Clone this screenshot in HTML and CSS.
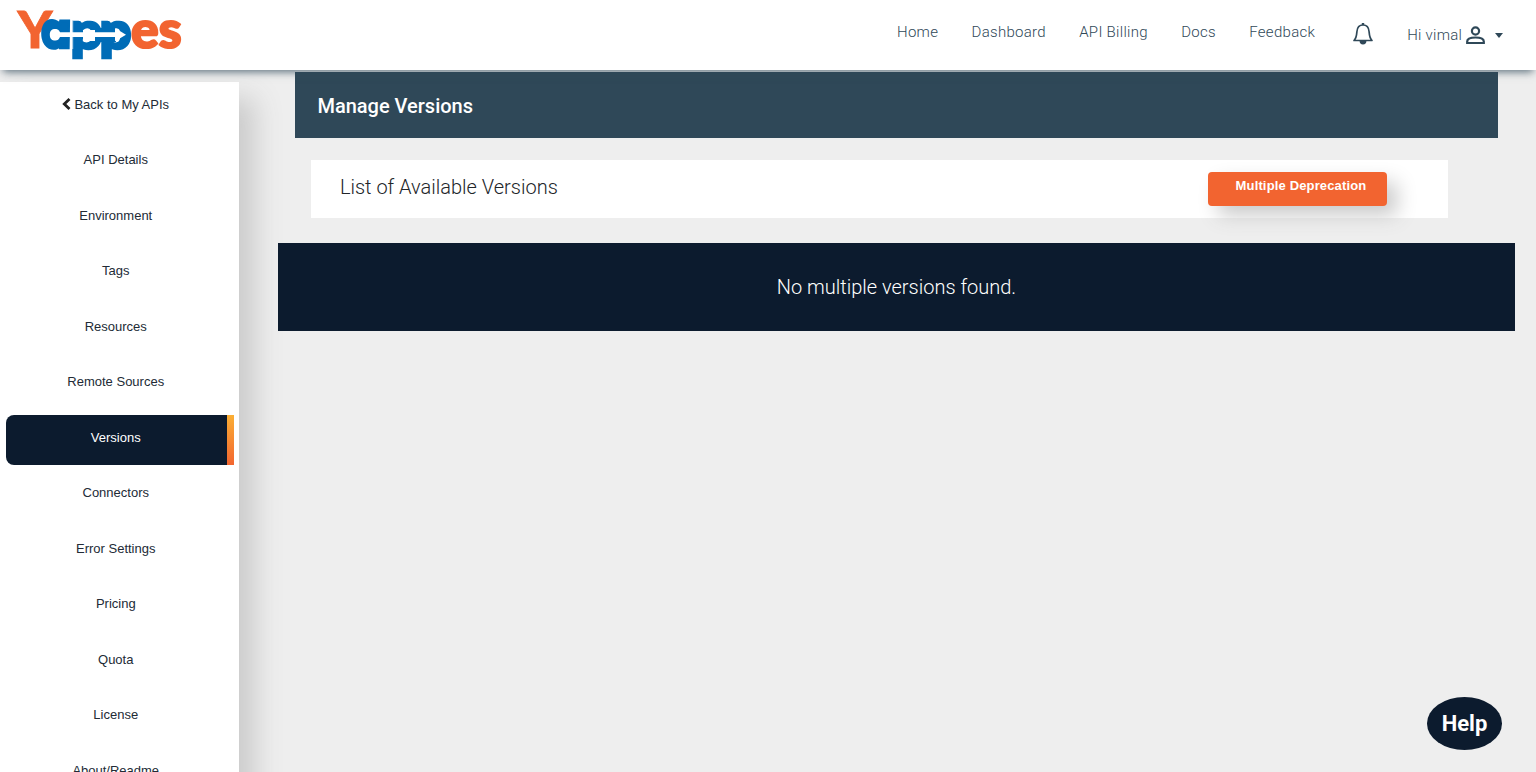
FILE: index.html
```html
<!DOCTYPE html>
<html lang="en">
<head>
<meta charset="utf-8">
<title>Yappes - Manage Versions</title>
<link rel="stylesheet" href="styles.css">
</head>
<body>
<header class="topbar">
  <svg class="logo" width="200" height="70" viewBox="0 0 200 70" role="img" aria-label="Yappes">
    <g class="logo-orange">
      <text x="17.500" y="48" textLength="35" lengthAdjust="spacingAndGlyphs">Y</text>
      <text class="logo-es" x="131" y="48" textLength="50.500" lengthAdjust="spacingAndGlyphs">es</text>
    </g>
    <g class="logo-blue">
      <text class="logo-a" transform="translate(43 48) skewX(12)" textLength="32" lengthAdjust="spacingAndGlyphs">a</text>
      <text x="70.500" y="48.500" textLength="32" lengthAdjust="spacingAndGlyphs">p</text>
      <text x="99.500" y="48.500" textLength="32" lengthAdjust="spacingAndGlyphs">p</text>
    </g>
    <path class="logo-fill" d="M76 30.500H84V39H76ZM94 28H116V42H94Z"/>
    <path class="logo-arrow" d="M60 32.300H83V30H95V32.300H115V28L126 34.700L115 41.300V37H95V41H83V37H60C59 39.500 57.500 40.500 55.500 40.500C51.500 40.500 49.800 38.500 49.800 34.700S51.500 29 55.500 29C57.500 29 59 29.800 60 32.300Z"/>
    <path class="logo-gap" d="M72.700 21V49"/>
  </svg>
  <nav class="nav">
    <a>Home</a><a>Dashboard</a><a>API Billing</a><a>Docs</a><a>Feedback</a>
  </nav>
  <svg class="bell" width="22" height="24" viewBox="0 0 22 24">
    <path class="line" d="M2 18.500C4.500 16 4.600 13.500 4.900 9.700C5.200 5.500 7.600 3 11 3S16.800 5.500 17.100 9.700C17.400 13.500 17.500 16 20 18.500Z"/>
    <path class="solid" d="M9.800 1h2.400v2H9.800zM7.600 19h6.800a3.400 3.400 0 0 1-6.800 0z"/>
  </svg>
  <div class="user">
    <span>Hi vimal</span>
    <svg width="19" height="19" viewBox="0 0 19 19">
      <circle class="person" cx="9.500" cy="5" r="3.600"/>
      <path class="person" d="M1.200 17V15.500C1.200 12.900 5 11.500 9.500 11.500S17.800 12.900 17.800 15.500V17Z"/>
    </svg>
    <i class="caret"></i>
  </div>
</header>
<div class="page">
  <aside class="sidebar">
    <a class="item"><svg class="back" width="9" height="12" viewBox="0 0 9 12"><path d="M7.500 1L2.300 6L7.500 11"/></svg>Back to My APIs</a>
    <a class="item">API Details</a>
    <a class="item">Environment</a>
    <a class="item">Tags</a>
    <a class="item">Resources</a>
    <a class="item">Remote Sources</a>
    <a class="item active">Versions</a>
    <a class="item">Connectors</a>
    <a class="item">Error Settings</a>
    <a class="item">Pricing</a>
    <a class="item">Quota</a>
    <a class="item">License</a>
    <a class="item">About/Readme</a>
  </aside>
  <main class="content">
    <h1 class="banner">Manage Versions</h1>
    <section class="list-head">
      <h2>List of Available Versions</h2>
      <button class="deprecate">Multiple Deprecation</button>
    </section>
    <div class="empty">No multiple versions found.</div>
  </main>
</div>
<button class="help">Help</button>
</body>
</html>
```
FILE: styles.css
```css
* { box-sizing: border-box; }
body {
  margin: 0;
  height: 772px;
  overflow: hidden;
  background: #eee;
  font-family: Roboto, sans-serif;
}
.topbar {
  position: relative;
  z-index: 2;
  display: flex;
  height: 70px;
  background: #fff;
  box-shadow: 0 5px 8px -3px rgba(47, 72, 88, 0.75);
}
.logo { flex: none; overflow: visible; }
.logo text { font: 900 52px Lato, sans-serif; }
.logo .logo-a { font: italic 800 49px "Open Sans", sans-serif; }
.logo-orange { fill: #f26430; stroke: #f26430; stroke-width: 0.8; }
.logo-es { stroke-width: 2.2; }
.logo-blue { fill: #006cb7; stroke: #006cb7; stroke-width: 2.6; }
.logo-fill { fill: #006cb7; }
.logo-arrow { fill: #fff; }
.logo-gap { stroke: #fff; stroke-width: 0.7; }
.nav {
  display: flex;
  gap: 33.300px;
  margin-left: 697px;
  padding-top: 22.400px;
  font-size: 15px;
  font-weight: 300;
  line-height: 20px;
  letter-spacing: 0.29px;
  color: #2f4858;
  white-space: nowrap;
}
.bell { flex: none; margin: 22px 0 0 37px; }
.line { fill: none; stroke: #2f4858; stroke-width: 1.7; stroke-linejoin: round; }
.solid { fill: #2f4858; }
.user {
  display: flex;
  align-items: center;
  height: 20px;
  margin: 25px 0 0 33px;
  font-size: 15px;
  font-weight: 300;
  letter-spacing: 0.27px;
  color: #2f4858;
  white-space: nowrap;
}
.user svg { flex: none; margin-left: 4px; }
.person { fill: none; stroke: #2f4858; stroke-width: 2.2; }
.caret {
  margin-left: 10px;
  border: 4.5px solid transparent;
  border-top: 5px solid #2f4858;
  border-bottom: 0;
}
.page { display: flex; height: 702px; overflow: hidden; }
.sidebar {
  display: flex;
  flex: none;
  flex-direction: column;
  gap: 5.500px;
  width: 239px;
  height: 760px;
  margin-top: 12px;
  padding: 0 5px 0 6px;
  background: #fff;
  box-shadow: 16px 16px 26px #cbcbcb;
}
.item {
  flex: none;
  height: 50px;
  padding: 14.900px 8.500px 0 0;
  font: 13px/15px "Liberation Sans", Arial, sans-serif;
  text-align: center;
  color: #222b36;
}
.back { margin-right: 3px; vertical-align: -1px; }
.back path { fill: none; stroke: #222; stroke-width: 2.8; }
.active {
  padding-right: 1.500px;
  border-right: 7px solid #f26430;
  border-image: linear-gradient(#fbb034, #f26430) 1;
  border-width: 0 7px 0 0;
  border-radius: 8px 0 0 8px;
  background: #0c1b2e;
  color: #fff;
}
.content { flex: 1; padding: 2px 21.500px 0 39.400px; }
.banner {
  height: 66px;
  margin: 0 16.500px;
  padding: 21.500px 22.500px;
  background: #2f4858;
  color: #fff;
  font-size: 20px;
  font-weight: 500;
  line-height: 24px;
}
.list-head {
  display: flex;
  align-items: flex-start;
  justify-content: space-between;
  height: 58px;
  margin: 22.400px 66.500px 0 32.500px;
  padding: 11.600px 61px 0 29px;
  background: #fff;
}
.list-head h2 {
  margin: 3.500px 0 0;
  font-size: 20px;
  font-weight: 300;
  line-height: 24px;
  color: #212529;
}
.deprecate {
  width: 179px;
  height: 34px;
  padding: 0 0 6px 7px;
  border: 0;
  border-radius: 4px;
  background: #f26430;
  box-shadow: 10px 10px 20px #cbcbcb;
  color: #fff;
  font: bold 13px/15px "Liberation Sans", Arial, sans-serif;
  letter-spacing: 0.15px;
}
.empty {
  height: 88px;
  margin-top: 24.600px;
  padding-top: 32px;
  background: #0c1b2e;
  color: #fff;
  font-size: 20px;
  font-weight: 300;
  line-height: 24px;
  text-align: center;
}
.help {
  position: fixed;
  right: 34px;
  bottom: 22px;
  width: 75px;
  height: 53px;
  padding: 0;
  border: 0;
  border-radius: 50%;
  background: #0c1b2e;
  color: #fff;
  font: bold 22px Roboto, sans-serif;
}
```
